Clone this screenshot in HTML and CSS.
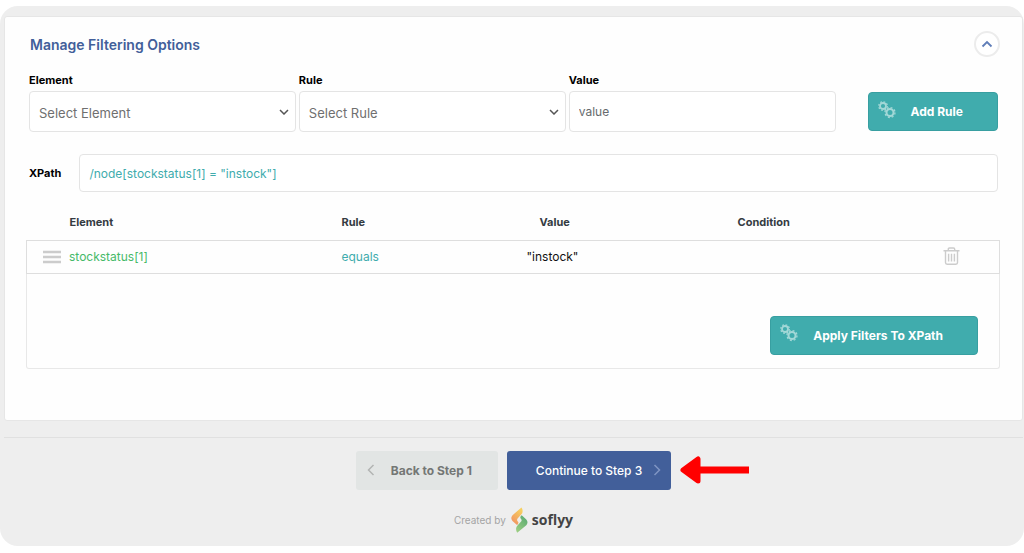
FILE: index.html
```html
<!DOCTYPE html>
<html lang="en">
<head>
    <meta charset="UTF-8">
    <meta name="viewport" content="width=device-width, initial-scale=1.0">
    <title>Manage Filtering Options</title>
    <link rel="stylesheet" href="styles.css">
</head>
<body>
    <!-- Shared icon -->
    <svg class="sprite" width="0" height="0" aria-hidden="true">
        <symbol id="gears" viewBox="0 0 18 18">
            <g fill="none" stroke="currentColor">
                <circle cx="5" cy="5" r="3" stroke-width="1.8"/>
                <circle cx="5" cy="5" r="4.3" stroke-width="1.2" stroke-dasharray="1.7 1.68"/>
                <circle cx="12" cy="11.5" r="3.5" stroke-width="2"/>
                <circle cx="12" cy="11.5" r="5" stroke-width="1.3" stroke-dasharray="1.96 1.96"/>
            </g>
        </symbol>
    </svg>

    <div class="wrapper">
        <main class="panel">
            <div class="panel-header">
                <h1>Manage Filtering Options</h1>
                <button type="button" class="collapse" aria-label="Collapse">
                    <svg width="12" height="8" viewBox="0 0 12 8"><path d="M1.5 6.5 6 2l4.5 4.5" fill="none" stroke="currentColor" stroke-width="1.8"/></svg>
                </button>
            </div>

            <form class="rule-form">
                <div class="field">
                    <label for="element">Element</label>
                    <select id="element">
                        <option>Select Element</option>
                    </select>
                    <svg class="caret" width="10" height="6" viewBox="0 0 10 6"><path d="M1 1l4 4 4-4"/></svg>
                </div>
                <div class="field">
                    <label for="rule">Rule</label>
                    <select id="rule">
                        <option>Select Rule</option>
                    </select>
                    <svg class="caret" width="10" height="6" viewBox="0 0 10 6"><path d="M1 1l4 4 4-4"/></svg>
                </div>
                <div class="field">
                    <label for="value">Value</label>
                    <input type="text" id="value" placeholder="value">
                </div>
                <button type="button" class="btn btn-teal add-rule">
                    <svg class="gears" width="18" height="18"><use href="#gears"/></svg>
                    Add Rule
                </button>
            </form>

            <div class="xpath">
                <label for="xpath">XPath</label>
                <input type="text" id="xpath" value='/node[stockstatus[1] = "instock"]'>
            </div>

            <div class="filters">
                <table>
                    <thead>
                        <tr>
                            <th class="col-element">Element</th>
                            <th class="col-rule">Rule</th>
                            <th class="col-value">Value</th>
                            <th class="col-condition">Condition</th>
                            <th class="col-remove"></th>
                        </tr>
                    </thead>
                    <tbody>
                        <tr>
                            <td>
                                <div class="element-name">
                                    <svg width="18" height="14" viewBox="0 0 18 14"><path d="M0 2h18M0 7h18M0 12h18" stroke="#cccccc" stroke-width="2.6"/></svg>
                                    stockstatus[1]
                                </div>
                            </td>
                            <td class="rule-name">equals</td>
                            <td>"instock"</td>
                            <td></td>
                            <td>
                                <button type="button" class="remove" aria-label="Remove rule">
                                    <svg width="17" height="18" viewBox="0 0 17 18">
                                        <g fill="none" stroke="currentColor" stroke-width="1.4">
                                            <path d="M0.5 3.7h16M5.3 3.5V2.2q0-1.2 1.2-1.2h4q1.2 0 1.2 1.2v1.3"/>
                                            <path d="M2.5 4v11.6q0 1.6 1.6 1.6h8.8q1.6 0 1.6-1.6V4"/>
                                            <path d="M5.6 6.8v7.6M8.5 6.8v7.6M11.4 6.8v7.6"/>
                                        </g>
                                    </svg>
                                </button>
                            </td>
                        </tr>
                    </tbody>
                </table>
                <div class="apply">
                    <button type="button" class="btn btn-teal">
                        <svg class="gears" width="18" height="18"><use href="#gears"/></svg>
                        Apply Filters To XPath
                    </button>
                </div>
            </div>
        </main>

        <footer>
            <div class="steps">
                <button type="button" class="btn btn-back">
                    <svg width="8" height="12" viewBox="0 0 8 12"><path d="M6.5 1 1.5 6l5 5" fill="none" stroke="currentColor" stroke-width="1.5"/></svg>
                    Back to Step 1
                </button>
                <button type="button" class="btn btn-next">
                    Continue to Step 3
                    <svg width="8" height="12" viewBox="0 0 8 12"><path d="M1.5 1l5 5-5 5" fill="none" stroke="currentColor" stroke-width="1.5"/></svg>
                </button>
                <svg class="arrow" width="70" height="28" viewBox="0 0 70 28">
                    <path d="M3 14 18 3v22Z" fill="#ff0000" stroke="#ff0000" stroke-width="5" stroke-linejoin="round"/>
                    <path d="M18 14h51" stroke="#ff0000" stroke-width="7"/>
                </svg>
            </div>
            <div class="credit">
                <span>Created by</span>
                <a href="#">
                    <svg width="17" height="26" viewBox="0 0 17 26">
                        <defs>
                            <linearGradient id="warm" x1="0" y1="1" x2="0.6" y2="0">
                                <stop offset="0" stop-color="#f08a62"/>
                                <stop offset="1" stop-color="#f6cf60"/>
                            </linearGradient>
                            <linearGradient id="fresh" x1="0" y1="1" x2="0.6" y2="0">
                                <stop offset="0" stop-color="#a2d184"/>
                                <stop offset="1" stop-color="#5fad72"/>
                            </linearGradient>
                        </defs>
                        <path d="M10.5 0.4q1.5 2.4 1 4.8-.2 1.3-1.3 2.4L6.6 11.6q-1 1.3 0 2.6l.8 1q.1 1.7-1.4 2.7L1.5 14q-2.4-2.9 0-5.8Z" fill="url(#warm)"/>
                        <path d="M6.2 25.8q-1.5-2.4-1-4.8.2-1.3 1.3-2.4l3.6-4q1-1.3 0-2.6l-.8-1.1Q9.2 9.2 10.7 8.2l4.6 4.2q2.4 2.9 0 5.8Z" fill="url(#fresh)"/>
                    </svg>
                    soflyy
                </a>
            </div>
        </footer>
    </div>
</body>
</html>
```
FILE: styles.css
```css
:root {
    --blue: #425f9a;
    --teal: #40acad;
    --green: #46ba69;
    --grey-bg: #eeeeee;
    --border: #e4e4e4;
    --border-radius: 4px;
}

* {
    margin: 0;
    padding: 0;
    box-sizing: border-box;
    font-family: Inter, "Liberation Sans", sans-serif;
}

body {
    background-color: white;
    color: #111111;
    font-size: 12px;
    padding: 6px 0;
}

.sprite {
    position: absolute;
}

.wrapper {
    background-color: var(--grey-bg);
    border-radius: 18px;
    padding: 10px 1px 13px 4px;
}

.panel {
    background-color: #fefefe;
    border: 1px solid #e6e6e6;
    border-radius: 3px;
    padding: 14px 22px 51px 21px;
}

.panel-header {
    display: flex;
    justify-content: space-between;
    align-items: center;
    padding-left: 4px;
}

h1 {
    color: var(--blue);
    font-size: 14px;
    font-weight: 600;
}

.collapse {
    width: 26px;
    height: 26px;
    display: flex;
    justify-content: center;
    align-items: center;
    background-color: white;
    border: 2px solid #ececec;
    border-radius: 50%;
    color: #5f7db8;
    cursor: pointer;
}

label {
    color: black;
    font-size: 11px;
    font-weight: 700;
}

.rule-form {
    display: flex;
    align-items: flex-end;
    gap: 3px;
    padding: 16px 2px 0 3px;
}

.field {
    flex: 1;
    position: relative;
}

.field label {
    display: block;
    line-height: 14px;
    margin-bottom: 4px;
}

select, input {
    width: 100%;
    height: 41px;
    padding: 0 9px;
    background-color: white;
    border: 1px solid var(--border);
    border-radius: var(--border-radius);
    color: #6f6f6f;
    font-size: 12px;
    appearance: none;
}

select {
    padding-top: 3px;
    font-size: 13px;
}

input::placeholder {
    color: #666a6d;
    opacity: 1;
}

.caret {
    position: absolute;
    right: 7px;
    bottom: 17px;
    fill: none;
    stroke: #555555;
    stroke-width: 1.5;
    pointer-events: none;
}

.btn {
    height: 39px;
    display: flex;
    align-items: center;
    border: none;
    border-radius: var(--border-radius);
    font-size: 12px;
    font-weight: 700;
    white-space: nowrap;
    cursor: pointer;
}

.btn-teal {
    gap: 15px;
    padding: 0 34px 0 9px;
    background-color: var(--teal);
    border: 1px solid #389fa1;
    color: white;
}

.gears {
    color: #a3d8d7;
    margin-bottom: 4px;
}

.add-rule {
    margin: 0 0 1px 29px;
}

.xpath {
    display: flex;
    align-items: center;
    gap: 18px;
    padding: 22px 2px 0 3px;
}

.xpath input {
    flex: 1;
    height: 38px;
    color: var(--teal);
}

table {
    width: 100%;
    table-layout: fixed;
    border-collapse: collapse;
}

th {
    height: 48px;
    padding-top: 13px;
    color: #343b42;
    font-size: 11px;
    font-weight: 700;
    text-align: left;
}

th.col-element {
    padding-left: 43px;
}

.col-element {
    width: 315px;
}

.col-rule {
    width: 185px;
}

.col-value {
    width: 211px;
    padding-left: 13px;
}

.col-remove {
    width: 57px;
}

tbody tr {
    border: 1px solid #dedede;
}

td {
    height: 33px;
    font-size: 12px;
}

.element-name {
    display: flex;
    align-items: center;
    gap: 8px;
    padding-left: 16px;
    color: var(--green);
}

.rule-name {
    color: var(--teal);
}

.remove {
    display: block;
    padding-top: 2px;
    background: none;
    border: none;
    color: #cccccc;
    cursor: pointer;
}

.apply {
    display: flex;
    justify-content: flex-end;
    padding: 42px 21px 13px;
    border: 1px solid #e8e8e8;
    border-top: none;
    border-radius: 0 0 3px 3px;
}

footer {
    margin-top: 16px;
    padding-top: 13px;
    border-top: 1px solid #e0e0e0;
}

.steps {
    display: flex;
    align-items: center;
    justify-content: center;
    gap: 9px;
    padding-left: 79px;
}

.btn-back {
    gap: 16px;
    padding: 0 26px 0 11px;
    background-color: #e2e5e4;
    border-radius: 3px;
    color: #747775;
}

.btn-back svg {
    color: #b2b4b3;
}

.btn-next {
    gap: 11px;
    padding: 0 10px 0 29px;
    background-color: var(--blue);
    border-radius: 3px;
    color: white;
    font-weight: 500;
}

.btn-next svg {
    color: #7f95c3;
}

.credit {
    display: flex;
    align-items: center;
    justify-content: center;
    gap: 5px;
    margin-top: 17px;
    color: #a4a4a4;
    font-size: 10px;
}

.credit a {
    display: flex;
    align-items: center;
    gap: 4px;
    color: #444444;
    font-family: "Open Sans", sans-serif;
    font-size: 14px;
    font-weight: 700;
    line-height: 26px;
    text-decoration: none;
}
```
